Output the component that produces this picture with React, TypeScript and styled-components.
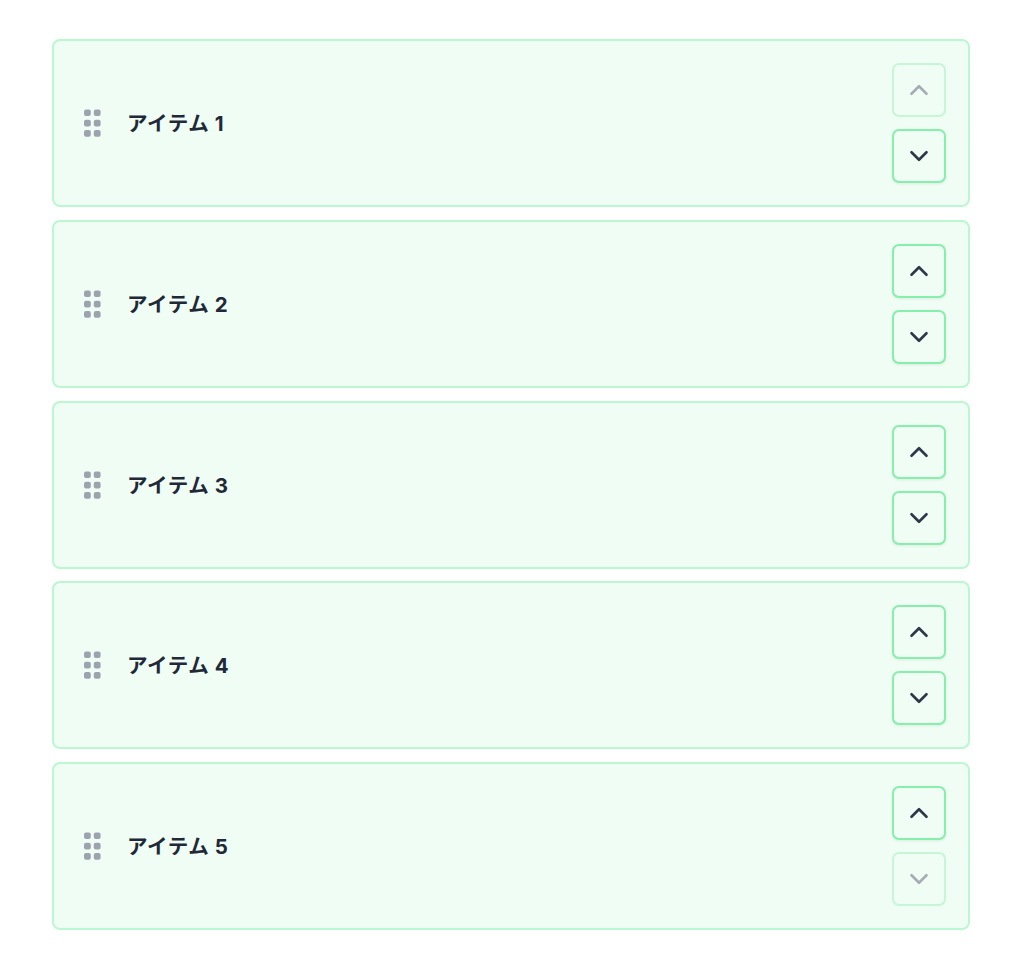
import { useState } from "react"
import styled, { createGlobalStyle } from "styled-components"

const GlobalStyle = createGlobalStyle`
    body{
        margin: 0;
        background: #fff;
        font-family: Inter, "Noto Sans CJK JP", sans-serif;
    }
`

const List = styled.div`
    display: flex;
    flex-direction: column;
    gap: 12.75px;
    padding: 39px 54px 40px 52px;
`

const Card = styled.div`
    display: flex;
    align-items: center;
    justify-content: space-between;
    background-color: #f0fdf4;
    border: 2px solid #bbf7d0;
    border-radius: 8px;
    padding: 22px 22px 22px 30px;

    .left{
        display: flex;
        align-items: center;
        gap: 26px;
    }

    .label{
        font-size: 20.5px;
        font-weight: 700;
        color: #1f2937;
        letter-spacing: 0.6px;
        margin-top: -2px;
    }

    .controls{
        display: flex;
        flex-direction: column;
        gap: 12px;
    }
`

const MoveButton = styled.button<{ $off: boolean }>`
    width: 54px;
    height: 54px;
    display: flex;
    align-items: center;
    justify-content: center;
    padding: 0;
    background-color: #f0fdf4;
    border: 2px solid ${p => p.$off ? "#c6f6d5" : "#86efac"};
    border-radius: 7px;
    box-shadow: ${p => p.$off ? "none" : "0 1px 3px rgba(0, 0, 0, 0.08)"};
    color: ${p => p.$off ? "#a7acb4" : "#2d3748"};
    cursor: ${p => p.$off ? "default" : "pointer"};
`

const Grip = () => (
    <svg width="17" height="28" viewBox="0 0 17 28">
        {[0, 10.3, 20.6].map(y => [0, 9.8].map(x => (
            <rect key={`${x}-${y}`} x={x} y={y + 0.5} width="6.8" height="6.6" rx="2" fill="#9ca3af" />
        )))}
    </svg>
)

const Chevron = ({ up }: { up?: boolean }) => (
    <svg width="24" height="24" viewBox="0 0 24 24" fill="none" stroke="currentColor"
        strokeWidth="2.6" strokeLinecap="round" strokeLinejoin="round">
        {up
            ? <path d="M4.5 15.75l7.5-7.5 7.5 7.5" />
            : <path d="M19.5 8.25l-7.5 7.5-7.5-7.5" />}
    </svg>
)

const App = () => {
    const [items, setItems] = useState(["アイテム 1", "アイテム 2", "アイテム 3", "アイテム 4", "アイテム 5"])

    const move = (i: number, dir: number) => {
        const j = i + dir
        if (j < 0 || j >= items.length) return
        const next = [...items]
        ;[next[i], next[j]] = [next[j], next[i]]
        setItems(next)
    }

    return (
        <>
            <GlobalStyle />
            <List>
                {items.map((item, i) => (
                    <Card key={item}>
                        <div className="left">
                            <Grip />
                            <span className="label">{item}</span>
                        </div>
                        <div className="controls">
                            <MoveButton $off={i === 0} disabled={i === 0} onClick={() => move(i, -1)}>
                                <Chevron up />
                            </MoveButton>
                            <MoveButton $off={i === items.length - 1} disabled={i === items.length - 1} onClick={() => move(i, 1)}>
                                <Chevron />
                            </MoveButton>
                        </div>
                    </Card>
                ))}
            </List>
        </>
    )
}

export default App
